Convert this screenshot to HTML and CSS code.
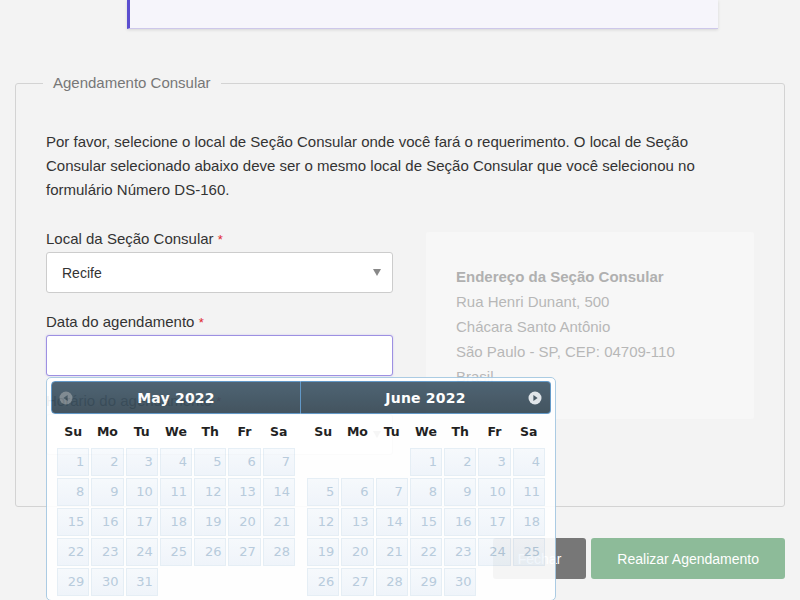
FILE: index.html
```html
<!DOCTYPE html>
<html lang="pt-BR">
<head>
<meta charset="utf-8">
<title>Agendamento Consular</title>
<link rel="stylesheet" href="styles.css">
</head>
<body>
<div class="notice"></div>

<form class="form">
  <fieldset class="panel">
    <legend class="panel-title">Agendamento Consular</legend>
    <p class="intro">Por favor, selecione o local de Seção Consular onde você fará o requerimento. O local de Seção Consular selecionado abaixo deve ser o mesmo local de Seção Consular que você selecionou no formulário Número DS-160.</p>
    <div class="row">
      <div class="fields">
        <div class="field">
          <label class="label">Local da Seção Consular <span class="req">*</span></label>
          <div class="control select"><span>Recife</span><span class="caret"></span></div>
        </div>
        <div class="field">
          <label class="label">Data do agendamento <span class="req">*</span></label>
          <div class="control input-focus"></div>
        </div>
        <div class="field field-time">
          <label class="label">Horário do agendamento <span class="req">*</span></label>
          <div class="control select"><span></span><span class="caret"></span></div>
        </div>
      </div>
      <div class="address">
        <div class="address-title">Endereço da Seção Consular</div>
        <div>Rua Henri Dunant, 500</div>
        <div>Chácara Santo Antônio</div>
        <div>São Paulo - SP, CEP: 04709-110</div>
        <div>Brasil</div>
      </div>
    </div>
  </fieldset>
  <div class="actions">
    <button type="button" class="btn btn-close">Fechar</button>
    <button type="button" class="btn btn-submit">Realizar Agendamento</button>
  </div>
</form>

<div class="datepicker">
  <div class="dp-group">
    <div class="dp-header dp-header-first">
      <svg class="dp-nav dp-prev" width="14" height="14" viewBox="0 0 14 14"><circle cx="7" cy="7" r="6.5" fill="#838d93"/><path d="M8.6 3.9 L4.4 7 L8.6 10.1 Z" fill="#3d505c"/></svg>
      <div class="dp-title">May 2022</div>
      <span class="dp-spacer"></span>
    </div>
    <div class="dp-dow"><span>Su</span><span>Mo</span><span>Tu</span><span>We</span><span>Th</span><span>Fr</span><span>Sa</span></div>
    <div class="dp-days">
      <span class="d">1</span><span class="d">2</span><span class="d">3</span><span class="d">4</span><span class="d">5</span><span class="d">6</span><span class="d">7</span>
      <span class="d">8</span><span class="d">9</span><span class="d">10</span><span class="d">11</span><span class="d">12</span><span class="d">13</span><span class="d">14</span>
      <span class="d">15</span><span class="d">16</span><span class="d">17</span><span class="d">18</span><span class="d">19</span><span class="d">20</span><span class="d">21</span>
      <span class="d">22</span><span class="d">23</span><span class="d">24</span><span class="d">25</span><span class="d">26</span><span class="d">27</span><span class="d">28</span>
      <span class="d">29</span><span class="d">30</span><span class="d">31</span>
    </div>
  </div>
  <div class="dp-group">
    <div class="dp-header dp-header-last">
      <span class="dp-spacer"></span>
      <div class="dp-title">June 2022</div>
      <svg class="dp-nav dp-next" width="14" height="14" viewBox="0 0 14 14"><circle cx="7" cy="7" r="6.5" fill="#dfe4e8"/><path d="M5.4 3.9 L9.6 7 L5.4 10.1 Z" fill="#3d505c"/></svg>
    </div>
    <div class="dp-dow"><span>Su</span><span>Mo</span><span>Tu</span><span>We</span><span>Th</span><span>Fr</span><span>Sa</span></div>
    <div class="dp-days">
      <span class="e"></span><span class="e"></span><span class="e"></span><span class="d">1</span><span class="d">2</span><span class="d">3</span><span class="d">4</span>
      <span class="d">5</span><span class="d">6</span><span class="d">7</span><span class="d">8</span><span class="d">9</span><span class="d">10</span><span class="d">11</span>
      <span class="d">12</span><span class="d">13</span><span class="d">14</span><span class="d">15</span><span class="d">16</span><span class="d">17</span><span class="d">18</span>
      <span class="d">19</span><span class="d">20</span><span class="d">21</span><span class="d">22</span><span class="d">23</span><span class="d">24</span><span class="d">25</span>
      <span class="d">26</span><span class="d">27</span><span class="d">28</span><span class="d">29</span><span class="d">30</span>
    </div>
  </div>
</div>
</body>
</html>
```
FILE: styles.css
```css
html, body {
  margin: 0;
  padding: 0;
}
body {
  background: #f3f3f3;
  font-family: "Liberation Sans", Arial, sans-serif;
  color: #333;
  font-size: 15px;
}

.notice {
  box-sizing: border-box;
  width: 591px;
  height: 29px;
  margin-left: 127px;
  background: #f6f5fb;
  border-left: 3px solid #5b4ecf;
  border-bottom: 1px solid #cdc7ea;
  box-shadow: 0 1px 3px rgba(0, 0, 0, 0.12);
}

.form {
  margin: 0;
}

.panel {
  margin: 44px 15px 0;
  padding: 37px 30px 51px;
  border: 1px solid #d3d3d3;
  border-radius: 3px;
  min-width: 0;
}
.panel-title {
  font-size: 15px;
  line-height: 20px;
  color: #777;
  padding: 0 10px;
  margin-left: -3px;
}

.intro {
  max-width: 700px;
  margin: 0 0 26px;
  line-height: 24px;
  font-size: 15px;
}

.row {
  display: grid;
  grid-template-columns: 347px 1fr;
  column-gap: 33px;
  align-items: start;
}

.field + .field {
  margin-top: 18px;
}
.field-time {
  margin-top: 14px !important;
}
.label {
  display: block;
  font-size: 15px;
  line-height: 22px;
  margin-bottom: 1px;
}
.req {
  color: #e0262f;
  font-size: 13px;
}

.control {
  box-sizing: border-box;
  height: 41px;
  background: #fff;
  border: 1px solid #ccc;
  border-radius: 3px;
  padding: 0 11px 0 15px;
  font-size: 14px;
  color: #333;
  display: flex;
  align-items: center;
  justify-content: space-between;
}
.caret {
  width: 0;
  height: 0;
  border-left: 4.5px solid transparent;
  border-right: 4.5px solid transparent;
  border-top: 7px solid #888;
}
.input-focus {
  border-color: #9d90e2;
  box-shadow: 0 0 2px rgba(120, 100, 220, 0.35);
}

.address {
  margin-top: 4px;
  background: #f7f7f7;
  border-radius: 3px;
  padding: 32px 30px 30px;
  line-height: 25px;
  font-size: 15px;
  color: #b7b7b7;
}
.address-title {
  font-weight: bold;
  color: #b0b0b0;
}

.actions {
  display: flex;
  justify-content: flex-end;
  gap: 5px;
  margin: 31px 15px 0 0;
}
.btn {
  height: 41px;
  border: none;
  border-radius: 3px;
  font-family: "Liberation Sans", Arial, sans-serif;
  font-size: 14px;
  color: #fff;
  padding: 0 25px;
}
.btn-close {
  background: #777;
}
.btn-submit {
  background: #8dbb99;
  padding: 0 26px;
}

/* Datepicker overlay */
.datepicker {
  position: absolute;
  left: 46px;
  top: 377px;
  box-sizing: border-box;
  width: 510px;
  padding: 3px 4px 4px;
  background: #fff;
  border: 1px solid #a6c9e2;
  border-radius: 5px;
  opacity: 0.93;
  display: flex;
  font-family: "DejaVu Sans", Verdana, sans-serif;
}
.dp-group {
  width: 250px;
}
.dp-header {
  box-sizing: border-box;
  height: 33px;
  display: flex;
  align-items: center;
  background: linear-gradient(#43596a, #364955);
  border: 1px solid #5892c4;
  color: #fff;
}
.dp-header-first {
  border-radius: 4px 0 0 4px;
}
.dp-header-last {
  border-left: none;
  border-radius: 0 4px 4px 0;
}
.dp-title {
  flex: 1;
  text-align: center;
  font-weight: bold;
  font-size: 14px;
  letter-spacing: 0.2px;
}
.dp-nav {
  flex: none;
  display: block;
}
.dp-prev {
  margin-left: 7px;
  opacity: 0.85;
}
.dp-next {
  margin-right: 8px;
}
.dp-spacer {
  flex: none;
  width: 22px;
}
.dp-header-first .dp-spacer {
  width: 21px;
}

.dp-dow,
.dp-days {
  width: 238px;
  margin: 0 auto;
  display: grid;
  grid-template-columns: repeat(7, 1fr);
  column-gap: 2px;
}
.dp-dow {
  height: 34px;
  align-items: center;
  text-align: center;
  font-weight: bold;
  font-size: 12.5px;
  color: #111;
}
.dp-days {
  row-gap: 2px;
  grid-auto-rows: 28px;
}
.d {
  box-sizing: border-box;
  border: 1px solid #e5eef6;
  background: linear-gradient(#f7fafd, #eff5fb);
  color: #b4c9db;
  font-size: 13px;
  line-height: 26px;
  text-align: right;
  padding-right: 4px;
}
```
